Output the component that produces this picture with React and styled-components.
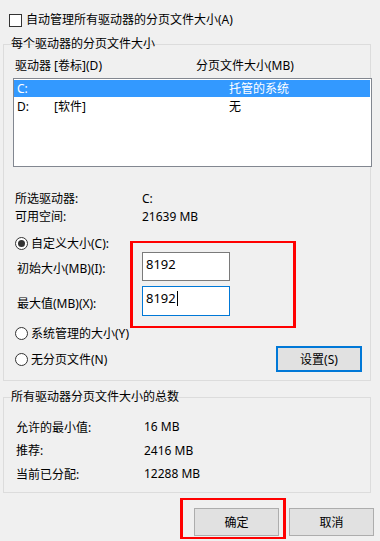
import React from "react";
import styled, { createGlobalStyle } from "styled-components";

const GlobalStyle = createGlobalStyle`
  html, body {
    margin: 0;
    padding: 0;
    background: #f0f0f0;
  }
  body {
    font-family: "Noto Sans", "Noto Sans CJK SC", sans-serif;
    font-size: 12px;
    color: #000;
  }
`;

const Dialog = styled.div`
    width: 380px;
    height: 541px;
    overflow: hidden;
    display: flex;
    flex-direction: column;
`;

const CheckRow = styled.div`
    display: flex;
    align-items: center;
    gap: 4px;
    height: 14px;
    margin: 13px 0 0 9px;
    line-height: 14px;
`;

const CheckBox = styled.span`
    width: 13px;
    height: 13px;
    box-sizing: border-box;
    border: 1px solid #333;
    background: #fff;
`;

const Group = styled.div`
    position: relative;
    margin: ${props => props.$top}px 0 0 3px;
    width: 368px;
    box-sizing: border-box;
    border: 1px solid #dcdcdc;
    padding: ${props => props.$pad};
`;

const Legend = styled.span`
    position: absolute;
    left: 7px;
    top: -9px;
    line-height: 16px;
    white-space: nowrap;
`;

const Header = styled.div`
    display: grid;
    grid-template-columns: 181px 1fr;
    padding-left: 11px;
    height: 16px;
    line-height: 16px;
`;

const ListBox = styled.div`
    margin: 4px 0 0 9px;
    width: 359px;
    height: 89px;
    box-sizing: border-box;
    border: 1px solid #828790;
    background: #fff;
    padding-top: 1px;
    display: flex;
    flex-direction: column;
    gap: 1px;
`;

const ListRow = styled.div`
    display: grid;
    grid-template-columns: 37px 175px 1fr;
    padding-left: 3px;
    height: 17px;
    line-height: 17px;
    margin-right: 1px;
    background: ${props => props.$selected ? '#3399ff' : 'transparent'};
    color: ${props => props.$selected ? '#fff' : '#000'};
`;

const InfoTable = styled.div`
    display: grid;
    grid-template-columns: ${props => props.$label}px 1fr;
    grid-auto-rows: ${props => props.$row}px;
    align-items: center;
    padding-left: ${props => props.$left}px;
    margin-top: ${props => props.$top || 0}px;
`;

const RadioRow = styled.div`
    display: flex;
    align-items: center;
    gap: 3px;
    height: 18px;
    padding-left: 11px;
    margin-top: ${props => props.$top}px;
`;

const Radio = styled.span`
    position: relative;
    width: 13px;
    height: 13px;
    box-sizing: border-box;
    border: 1px solid #333;
    border-radius: 50%;
    background: #fff;
    &::after {
        content: "";
        display: ${props => props.$checked ? 'block' : 'none'};
        position: absolute;
        left: 2px;
        top: 2px;
        width: 7px;
        height: 7px;
        border-radius: 50%;
        background: #333;
    }
`;

const SizeGrid = styled.div`
    position: relative;
    display: grid;
    grid-template-columns: 125px 88px;
    grid-template-rows: 29px 30px;
    row-gap: 5px;
    padding-left: 13px;
`;

const SizeLabel = styled.div`
    align-self: center;
    padding-top: 3px;
`;

const TextBox = styled.div`
    box-sizing: border-box;
    border: 1px solid ${props => props.$focused ? '#0078d7' : '#7a7a7a'};
    background: #fff;
    padding: 3px 0 0 3px;
    font-size: 13px;
    line-height: 16px;
    display: flex;
    align-items: flex-start;
`;

const Caret = styled.span`
    display: inline-block;
    width: 1px;
    height: 15px;
    margin: 1px 0 0 1px;
    background: #000;
`;

const Marker = styled.div`
    position: absolute;
    box-sizing: border-box;
    border: 2px solid #ff0000;
    border-left-width: 3px;
    border-right-width: 3px;
    pointer-events: none;
    left: ${props => props.$l}px;
    top: ${props => props.$t}px;
    width: ${props => props.$w}px;
    height: ${props => props.$h}px;
`;

const LastRow = styled.div`
    display: flex;
    align-items: center;
    justify-content: space-between;
    height: 26px;
    margin-top: 4px;
    padding-right: 8px;
`;

const SetButton = styled.div`
    width: 86px;
    height: 26px;
    box-sizing: border-box;
    border: 2px solid #0078d7;
    background: #e1e1e1;
    display: flex;
    align-items: center;
    justify-content: center;
`;

const Footer = styled.div`
    display: flex;
    justify-content: flex-end;
    gap: 10px;
    margin-top: 15px;
    padding-right: 6px;
`;

const ButtonWrap = styled.div`
    position: relative;
`;

const Button = styled.div`
    width: 85px;
    height: 28px;
    box-sizing: border-box;
    border: 1px solid #adadad;
    background: #e1e1e1;
    display: flex;
    align-items: center;
    justify-content: center;
`;

const drives = [
    { letter: 'C:', label: '', size: '托管的系统', selected: true },
    { letter: 'D:', label: '[软件]', size: '无', selected: false },
];

const totals = [
    ['允许的最小值:', '16 MB'],
    ['推荐:', '2416 MB'],
    ['当前已分配:', '12288 MB'],
];

const App = () => {
    return (
        <Dialog>
            <GlobalStyle />
            <CheckRow>
                <CheckBox />
                <span>自动管理所有驱动器的分页文件大小(A)</span>
            </CheckRow>

            <Group $top={17} $pad="13px 0 8px 0">
                <Legend>每个驱动器的分页文件大小</Legend>
                <Header>
                    <span>驱动器 [卷标](D)</span>
                    <span>分页文件大小(MB)</span>
                </Header>
                <ListBox>
                    {drives.map((d) => (
                        <ListRow key={d.letter} $selected={d.selected}>
                            <span>{d.letter}</span>
                            <span>{d.label}</span>
                            <span>{d.size}</span>
                        </ListRow>
                    ))}
                </ListBox>

                <InfoTable $label={127} $row={18} $left={11} $top={22}>
                    <span>所选驱动器:</span>
                    <span>C:</span>
                    <span>可用空间:</span>
                    <span>21639 MB</span>
                </InfoTable>

                <RadioRow $top={9}>
                    <Radio $checked />
                    <span>自定义大小(C):</span>
                </RadioRow>

                <SizeGrid>
                    <SizeLabel>初始大小(MB)(I):</SizeLabel>
                    <TextBox>8192</TextBox>
                    <SizeLabel>最大值(MB)(X):</SizeLabel>
                    <TextBox $focused>8192<Caret /></TextBox>
                    <Marker $l={126} $t={-11} $w={166} $h={87} />
                </SizeGrid>

                <RadioRow $top={8}>
                    <Radio />
                    <span>系统管理的大小(Y)</span>
                </RadioRow>

                <LastRow>
                    <RadioRow $top={0}>
                        <Radio />
                        <span>无分页文件(N)</span>
                    </RadioRow>
                    <SetButton>设置(S)</SetButton>
                </LastRow>
            </Group>

            <Group $top={16} $pad="17px 0 6px 0">
                <Legend>所有驱动器分页文件大小的总数</Legend>
                <InfoTable $label={128} $row={23.5} $left={12}>
                    {totals.map(([k, v]) => (
                        <React.Fragment key={k}>
                            <span>{k}</span>
                            <span>{v}</span>
                        </React.Fragment>
                    ))}
                </InfoTable>
            </Group>

            <Footer>
                <ButtonWrap>
                    <Button>确定</Button>
                    <Marker $l={-14} $t={-10} $w={106} $h={41} />
                </ButtonWrap>
                <Button>取消</Button>
            </Footer>
        </Dialog>
    );
}

export default App;
